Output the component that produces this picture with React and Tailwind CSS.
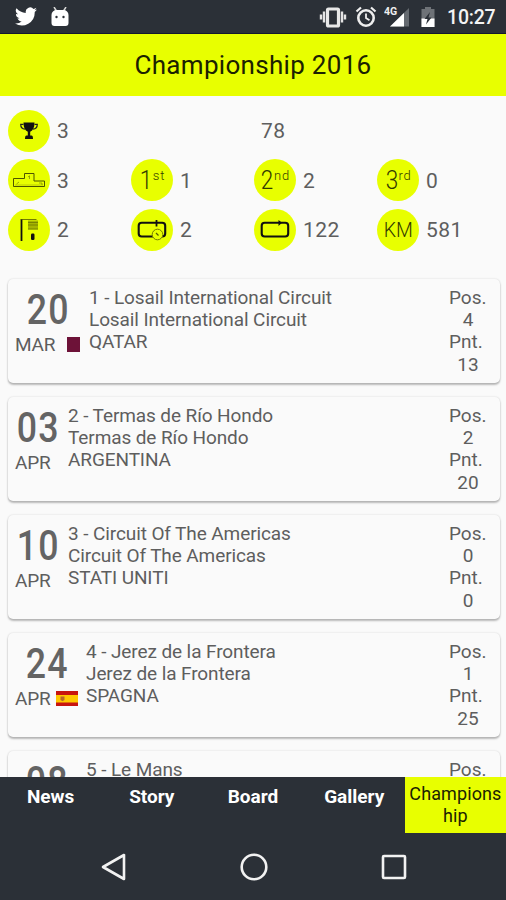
const races = [
  { id: 1, day: '20', month: 'MAR', flag: 'qa', name: 'Losail International Circuit', country: 'QATAR', pos: 4, pnt: 13 },
  { id: 2, day: '03', month: 'APR', name: 'Termas de Río Hondo', country: 'ARGENTINA', pos: 2, pnt: 20 },
  { id: 3, day: '10', month: 'APR', name: 'Circuit Of The Americas', country: 'STATI UNITI', pos: 0, pnt: 0 },
  { id: 4, day: '24', month: 'APR', flag: 'es', name: 'Jerez de la Frontera', country: 'SPAGNA', pos: 1, pnt: 25 },
  { id: 5, day: '08', name: 'Le Mans' },
]

const tabs = ['News', 'Story', 'Board', 'Gallery', 'Championship']

function StatusBar() {
  return (
    <div className="flex h-[34px] shrink-0 items-center border-b border-[#14182c] bg-[#2b3037] pl-[15px] pr-[10px]">
      <svg width="22" height="19" viewBox="0 0 24 20" fill="#fff">
        <path d="M24 2.4a10 10 0 0 1-2.8.8A5 5 0 0 0 23.3.5a10 10 0 0 1-3.1 1.2A4.9 4.9 0 0 0 11.8 6.1 14 14 0 0 1 1.7 1a4.9 4.9 0 0 0 1.5 6.6A4.9 4.9 0 0 1 1 7v.1a4.9 4.9 0 0 0 3.9 4.8 5 5 0 0 1-2.2.1 4.9 4.9 0 0 0 4.6 3.4A9.9 9.9 0 0 1 0 17.5 14 14 0 0 0 21.5 5.1 10 10 0 0 0 24 2.4z" />
      </svg>
      <svg className="ml-[14px]" width="18" height="20" viewBox="0 0 18 20">
        <path d="M3 0l2.5 4M15 0l-2.5 4" stroke="#d8d8d8" strokeWidth="1.5" />
        <path d="M.5 8a5 5 0 0 1 5-5h7a5 5 0 0 1 5 5v8a3 3 0 0 1-3 3h-11a3 3 0 0 1-3-3z" fill="#fff" />
        <circle cx="5.5" cy="10" r="1.2" fill="#2b3037" />
        <circle cx="12.5" cy="10" r="1.2" fill="#2b3037" />
      </svg>

      <div className="ml-auto flex items-center">
        <svg width="28" height="22" viewBox="0 0 28 22">
          <path d="M2 8.5v5M5 5.5v11M23 5.5v11M26 8.5v5" stroke="#e4e4e4" strokeWidth="2.4" />
          <rect x="8.5" y="3" width="11" height="17" rx="1" fill="none" stroke="#e8e8e8" strokeWidth="3.2" />
        </svg>
        <svg className="ml-[8px]" width="22" height="22" viewBox="0 0 22 22" fill="none" stroke="#eee">
          <circle cx="11" cy="12" r="7.7" strokeWidth="2.6" />
          <path d="M11 7.5V12l3.5 2.3" strokeWidth="1.8" />
          <path d="M1.5 5.5l4.500-4M20.5 5.5l-4.500-4" strokeWidth="2.2" />
        </svg>
        <svg className="ml-[7px]" width="27" height="22" viewBox="0 0 27 22">
          <path d="M25 2v18.5H6z" fill="#656a70" />
          <path d="M20 7v13.5H6z" fill="#fff" />
          <text x="0" y="9" fontSize="10.5" fontWeight="700" fontFamily="Roboto, sans-serif" fill="#eee">4G</text>
        </svg>
        <svg className="ml-[9px]" width="16" height="22" viewBox="0 0 16 22">
          <path d="M5 1h6v2h3.5v18h-13V3H5z" fill="#6e7277" />
          <path d="M1.5 12.5h13V21h-13z" fill="#fff" />
          <path d="M10 6L4.5 13h3L6 18.5l5.500-7h-3z" fill="#2b3037" />
        </svg>
        <span className="ml-[11px] w-[49px] pt-[3px] text-[19.5px] font-medium leading-[34px] tracking-[-0.2px] text-[#f4f4f4]">10:27</span>
      </div>
    </div>
  )
}

function Trophy() {
  return (
    <svg width="42" height="42" viewBox="0 0 42 42">
      <path d="M15.5 12.5h11c0 5-1.5 8-4.3 9.3v3.7h1.3c1 0 1.5 1 1.5 3.5h-8c0-2.5.5-3.5 1.5-3.5h1.3v-3.7C17 20.5 15.5 17.5 15.5 12.5z" fill="#111" />
      <path d="M15.5 14.3h-2.8c0 3 1.5 4.7 4.3 4.9M26.5 14.3h2.8c0 3-1.5 4.7-4.3 4.9" fill="none" stroke="#222" strokeWidth="1.2" />
    </svg>
  )
}

function Podium() {
  return (
    <svg width="42" height="42" viewBox="0 0 42 42" fill="none" stroke="#4d5400" strokeWidth="1">
      <path d="M5.5 27.5V19.500h11v-5h9.500v7.500h10.500v5.500z" />
      <path d="M20 18l1.500-1.200v3.200M8.500 25l2.500-2M31 24h3v2" strokeWidth=".5" />
      <path d="M7 26h28" strokeWidth=".3" />
    </svg>
  )
}

function Grid() {
  return (
    <svg width="42" height="42" viewBox="0 0 42 42">
      <path d="M13.5 10v22" stroke="#111" strokeWidth="1.8" />
      <path d="M13 10.5h15.5" stroke="#555c00" strokeWidth=".8" />
      <path d="M20 11.5h10v9H20z" fill="#a6b500" />
      <path d="M20 13.5h10M20 16h10M20 20h10" stroke="#667000" strokeWidth=".7" />
      <rect x="23" y="24.5" width="3.5" height="6.5" rx="1.2" fill="#111" />
    </svg>
  )
}

function Lap({ timer }) {
  return (
    <svg width="42" height="42" viewBox="0 0 42 42">
      <rect x="7.7" y="13.800" width="26.5" height="13.7" rx="3" fill="none" stroke="#111" strokeWidth="2.1" />
      {timer ? (
        <>
          <path d="M25.5 11v6.5" stroke="#111" strokeWidth="1.8" />
          <circle cx="26.5" cy="25.5" r="5.3" fill="#e8ff00" stroke="#747d00" strokeWidth="1" />
          <path d="M25 24l2.5 2.5" stroke="#555c00" strokeWidth="1.2" />
        </>
      ) : (
        <path d="M24.5 11l3.500 2.800-3.500 3.200z" fill="#111" />
      )}
    </svg>
  )
}

function Place({ n, suffix }) {
  return (
    <span className="flex items-start text-[25px] font-light leading-[43px] text-[#333a00]">
      <span className="scale-x-90">{n}</span>
      <span className="text-[13px] leading-[34px] tracking-[0.8px]">{suffix}</span>
    </span>
  )
}

const stats = [
  { icon: <Trophy />, value: 3 },
  null,
  { icon: null, value: 78 },
  null,
  { icon: <Podium />, value: 3 },
  { icon: <Place n="1" suffix="st" />, value: 1 },
  { icon: <Place n="2" suffix="nd" />, value: 2 },
  { icon: <Place n="3" suffix="rd" />, value: 0 },
  { icon: <Grid />, value: 2 },
  { icon: <Lap timer />, value: 2 },
  { icon: <Lap />, value: 122 },
  { icon: <span className="scale-x-95 pt-px text-[20.5px] font-light text-[#333a00]">KM</span>, value: 581 },
]

function Flag({ code }) {
  if (code === 'qa') return <span className="mr-px h-[15px] w-[13px] bg-[#6d1238]" />
  return (
    <svg width="22" height="15" viewBox="0 0 22 15">
      <path d="M0 0h22v15H0z" fill="#c8150f" />
      <path d="M0 4h22v7.5H0z" fill="#ffc800" />
      <path d="M4.5 5.5h4v3.5l-2 1.2-2-1.2z" fill="#b8692a" />
    </svg>
  )
}

const dateWidth = {
  1: 'w-[66px]',
  2: 'w-[45px]',
  3: 'w-[45px]',
  4: 'w-[63px]',
  5: 'w-[63px]',
}

function RaceCard({ race }) {
  return (
    <div className="flex h-[104px] shrink-0 rounded-[5px] bg-[#fafafa] pl-[7px] pr-[11px] pt-[7px] shadow-[0_2px_2px_rgba(0,0,0,0.25),0_0_2px_rgba(0,0,0,0.16)]">
      <div className={`shrink-0 ${dateWidth[race.id]}`}>
        <div className="flex justify-center pl-px text-[42px] font-medium leading-[47px] tracking-[1.5px] text-[#646464]">
          <span className="scale-x-85">{race.day}</span>
        </div>
        {race.month && (
          <div className="flex items-center justify-between text-[19px] leading-[24px] tracking-[-0.2px]">
            {race.month}
            {race.flag && <Flag code={race.flag} />}
          </div>
        )}
      </div>
      <div className="ml-[8px] flex-1 pt-px text-[19px] leading-[22.4px] tracking-[-0.1px]">
        <p>{race.id} - {race.name}</p>
        {race.country && (
          <>
            <p>{race.name}</p>
            <p>{race.country}</p>
          </>
        )}
      </div>
      <div className="w-[40px] pt-px text-[19px] leading-[22.4px]">
        <p>Pos.</p>
        {race.pos !== undefined && (
          <>
            <p className="pr-[2px] text-center">{race.pos}</p>
            <p>Pnt.</p>
            <p className="pr-[2px] text-center">{race.pnt}</p>
          </>
        )}
      </div>
    </div>
  )
}

export default function App() {
  return (
    <div className="flex h-[900px] w-[506px] flex-col overflow-hidden bg-[#fafafa] font-[Roboto,sans-serif] text-[#5e5e5e]">
      <StatusBar />
      <header className="flex h-[62px] shrink-0 items-center justify-center bg-[#e8ff00] text-[26px] tracking-[0.3px] text-[#1b2200]">
        Championship 2016
      </header>

      <main className="flex min-h-0 flex-1 flex-col overflow-hidden pl-[8px] pr-[6px] pt-[14px]">
        <div className="grid shrink-0 grid-cols-[repeat(4,123px)] gap-y-[7.3px]">
          {stats.map((s, i) => (
            <div key={i} className="flex h-[42px] items-center">
              {s?.icon && (
                <div className="flex size-[42px] shrink-0 items-center justify-center rounded-full bg-[#e8ff00]">
                  {s.icon}
                </div>
              )}
              {s && <span className="ml-[7px] pt-[2px] text-[21px] tracking-[0.5px]">{s.value}</span>}
            </div>
          ))}
        </div>

        <div className="mt-[28px] flex flex-col gap-[14px]">
          {races.map(race => (
            <RaceCard key={race.id} race={race} />
          ))}
        </div>
      </main>

      <nav className="grid h-[56px] shrink-0 grid-cols-5 bg-[#2b3037]">
        {tabs.map(tab => (
          <div
            key={tab}
            className={tab === 'Championship'
              ? 'break-all bg-[#e8ff00] px-[3px] pt-[6px] text-center text-[18px] leading-[22px] tracking-[0.1px] text-[#1b2200]'
              : 'pt-[8px] text-center text-[19px] font-bold leading-[24px] text-white'}>
            {tab}
          </div>
        ))}
      </nav>

      <div className="flex h-[67px] shrink-0 items-center justify-center gap-[112px] bg-[#2b3037] pl-[2px]">
        <svg width="28" height="28" viewBox="0 0 28 28" fill="none" stroke="#f2f2f2" strokeWidth="2.6">
          <path d="M24 2v24L3 14z" strokeLinejoin="round" />
        </svg>
        <svg width="28" height="28" viewBox="0 0 28 28" fill="none" stroke="#f2f2f2" strokeWidth="2.6">
          <circle cx="14" cy="14" r="12.3" />
        </svg>
        <svg width="28" height="28" viewBox="0 0 28 28" fill="none" stroke="#f2f2f2" strokeWidth="2.6">
          <rect x="3" y="3" width="22" height="22" rx="1" />
        </svg>
      </div>
    </div>
  )
}
